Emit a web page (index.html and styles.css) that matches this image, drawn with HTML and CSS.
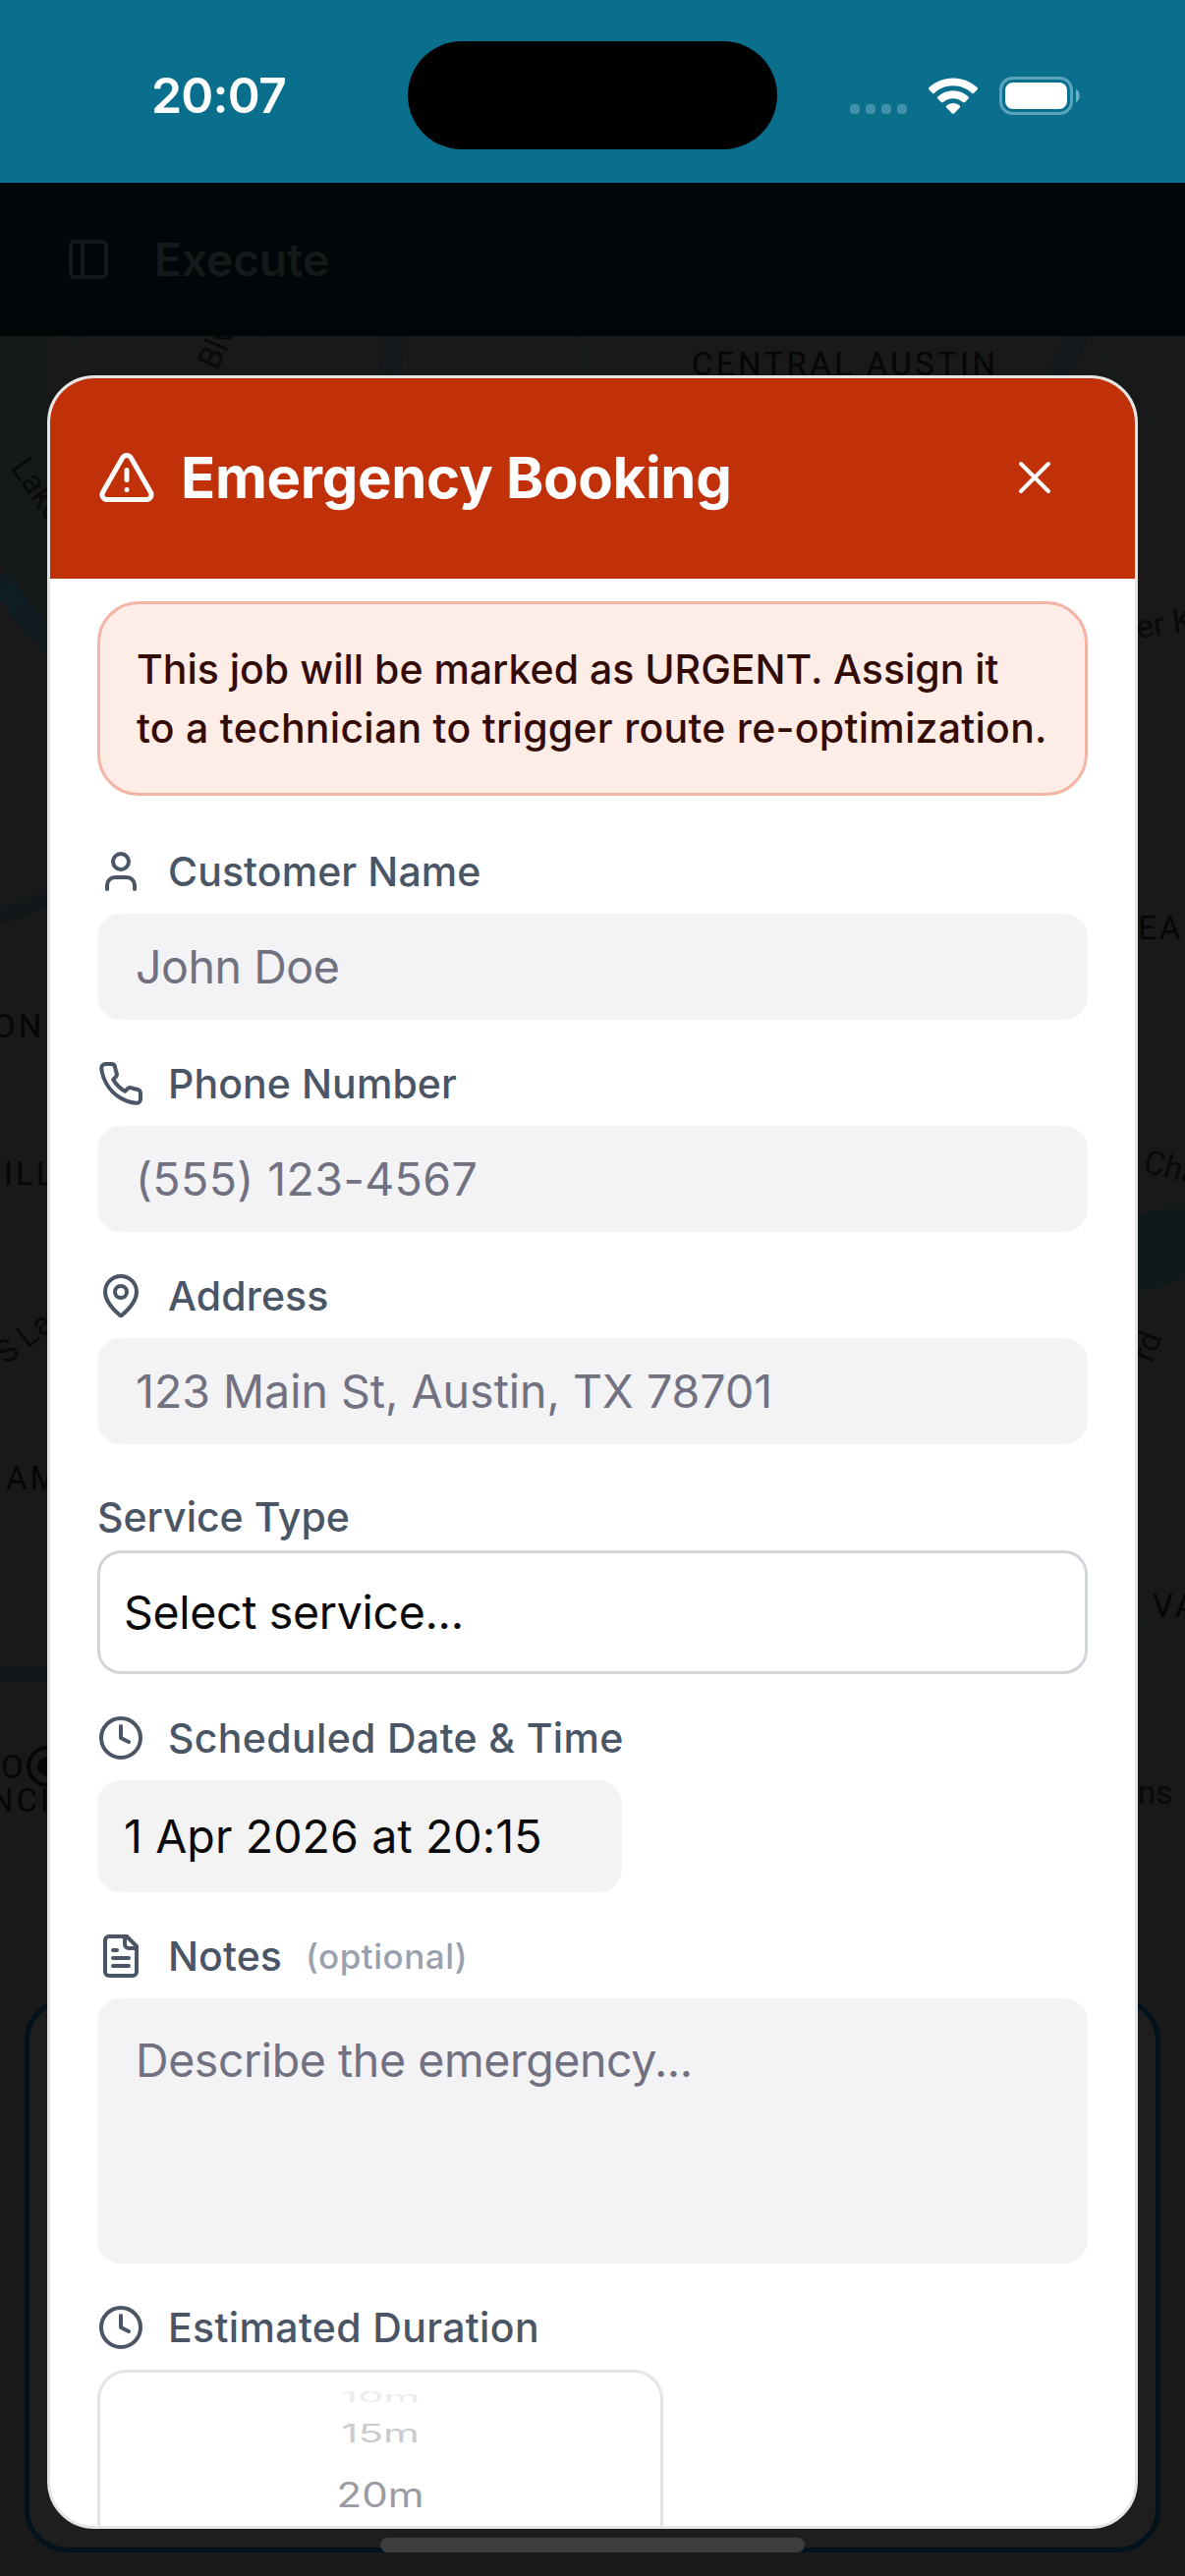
FILE: index.html
```html
<!DOCTYPE html>
<html lang="en">
<head>
    <meta charset="UTF-8">
    <meta name="viewport" content="width=device-width, initial-scale=1.0">
    <title>Emergency Booking</title>
    <link rel="stylesheet" href="styles.css">
</head>
<body>

<div class="statusbar">
    <div class="clock">20:07</div>
    <div class="island"></div>
    <div class="indicators">
        <svg class="dots" width="60" height="12" viewBox="0 0 60 12" fill="#4291aa">
            <rect x="1" y="1" width="10" height="10" rx="4"/>
            <rect x="17" y="1" width="10" height="10" rx="4"/>
            <rect x="33" y="1" width="10" height="10" rx="4"/>
            <rect x="49" y="1" width="10" height="10" rx="4"/>
        </svg>
        <svg class="wifi" width="52" height="38" viewBox="0 0 52 38" fill="#fff">
            <path d="M26 .5c9.300 0 18 3.500 24.500 9.600.7.700.7 1.500.1 2.200l-3.500 3.500c-.6.600-1.400.6-2 .1C40 11 33.300 8.300 26 8.300S12 11 6.900 15.900c-.6.500-1.400.5-2-.1l-3.500-3.500c-.6-.7-.6-1.500.1-2.200C8 4 16.700.5 26 .5z"/>
            <path d="M26 13.300c5.800 0 11.200 2.200 15.400 6 .7.600.7 1.500.1 2.100L38 24.900c-.6.600-1.400.6-2 .1-2.800-2.400-6.200-3.800-10-3.800s-7.200 1.400-10 3.800c-.6.500-1.400.5-2-.1l-3.500-3.500c-.6-.6-.6-1.500.1-2.100 4.200-3.800 9.600-6 15.400-6z"/>
            <path d="M26 26c2.500 0 4.800.9 6.700 2.500.7.600.7 1.400.1 2.100l-5.800 5.800c-.6.600-1.400.6-2 0l-5.800-5.800c-.6-.7-.6-1.500.1-2.100C21.200 26.900 23.500 26 26 26z"/>
        </svg>
        <svg class="battery" width="82" height="39" viewBox="0 0 82 39">
            <rect x="1.500" y="1.500" width="72" height="36" rx="12" fill="none" stroke="#5ba5bc" stroke-width="3"/>
            <rect x="6" y="6" width="63" height="27" rx="8" fill="#fff"/>
            <path d="M78 13c5 1.500 5 11.500 0 13z" fill="#6fb0c4"/>
        </svg>
    </div>
</div>

<div class="appbar">
    <svg class="icon" viewBox="0 0 24 24"><rect x="3" y="3" width="18" height="18" rx="2"/><path d="M9 3v18"/></svg>
    <span>Execute</span>
</div>

<div class="backdrop">
    <!-- dimmed map under the dialog -->
    <svg class="map" width="1206" height="1503" viewBox="0 0 1206 1503">
        <path d="M0 0h50v330L0 230z" fill="#161a17"/>
        <path d="M0 480h50v150H0zM1158 500h48v60h-48zM1158 640h48v500h-48z" fill="#171a18"/>
        <path d="M1158 896q20-10 48-8v70q-20 10-48 14z" fill="#0f191c"/>
        <path d="M0 244q20 40 60 76" fill="none" stroke="#0f1b1f" stroke-width="24"/>
        <path d="M0 590q30-6 60-26M0 1363h60" fill="none" stroke="#131719" stroke-width="16"/>
        <path d="M400-4q2 20-8 60M1098-4l-28 60" fill="none" stroke="#13181a" stroke-width="22"/>
        <path d="M270 0q10 30 50 60M590 0l12 60M80 0q-20 40-80 50M1120 20l60 80M1158 1310l48 10" fill="none" stroke="#161a1b" stroke-width="5"/>
        <g class="places">
            <text x="704" y="40" textLength="312">CENTRAL AUSTIN</text>
            <text x="-7" y="714">ON</text>
            <text x="4" y="864">ILL</text>
            <text x="6" y="1174">AM</text>
            <text x="1158" y="614">EA</text>
            <text x="1173" y="1304">VA</text>
            <text x="1" y="1468">O</text>
            <text x="-10" y="1502">NCH</text>
            <circle cx="48" cy="1456" r="19" fill="none" stroke="#060606" stroke-width="4"/>
            <circle cx="48" cy="1456" r="10"/>
        </g>
        <g class="roads">
            <text transform="translate(221 36) rotate(-66)">Blvd</text>
            <text transform="translate(10 134) rotate(55)">Lake</text>
            <text transform="translate(-4 262) rotate(50)" fill="#0b2028">er</text>
            <text transform="translate(6 1048) rotate(-38)">S Lamar</text>
            <text transform="translate(1158 308) rotate(-8)">er Kin</text>
            <text transform="translate(1162 850) rotate(15)">Cha</text>
            <text transform="translate(1172 1046) rotate(-68)">rd</text>
            <text x="1158" y="1494">ns</text>
        </g>
    </svg>
    <div class="sheet"></div>
</div>

<div class="dialog">
    <div class="dialog-head">
        <svg class="icon" viewBox="0 0 24 24"><path d="m21.730 18-8-14a2 2 0 0 0-3.480 0l-8 14A2 2 0 0 0 4 21h16a2 2 0 0 0 1.730-3"/><path d="M12 9v4M12 17h.01"/></svg>
        <span class="title">Emergency Booking</span>
        <svg class="icon close" viewBox="0 0 24 24"><path d="M18 6 6 18M6 6l12 12"/></svg>
    </div>
    <div class="dialog-body">
        <div class="alert">
            <div>This job will be marked as URGENT. Assign it</div>
            <div class="line2">to a technician to trigger route re-optimization.</div>
        </div>

        <div class="label">
            <svg class="icon" viewBox="0 0 24 24"><path d="M19 21v-2a4 4 0 0 0-4-4H9a4 4 0 0 0-4 4v2"/><circle cx="12" cy="7" r="4"/></svg>
            <span>Customer Name</span>
        </div>
        <div class="input name">John Doe</div>

        <div class="label">
            <svg class="icon" viewBox="0 0 24 24"><path d="M22 16.920v3a2 2 0 0 1-2.180 2 19.790 19.790 0 0 1-8.630-3.070 19.500 19.500 0 0 1-6-6 19.790 19.790 0 0 1-3.070-8.670A2 2 0 0 1 4.110 2h3a2 2 0 0 1 2 1.720 12.840 12.840 0 0 0 .7 2.810 2 2 0 0 1-.45 2.110L8.090 9.910a16 16 0 0 0 6 6l1.270-1.270a2 2 0 0 1 2.110-.45 12.840 12.840 0 0 0 2.810.7A2 2 0 0 1 22 16.920z"/></svg>
            <span>Phone Number</span>
        </div>
        <div class="input phone">(555) 123-4567</div>

        <div class="label">
            <svg class="icon" viewBox="0 0 24 24"><path d="M20 10c0 4.993-5.539 10.193-7.399 11.799a1 1 0 0 1-1.202 0C9.539 20.193 4 14.993 4 10a8 8 0 0 1 16 0"/><circle cx="12" cy="10" r="3"/></svg>
            <span>Address</span>
        </div>
        <div class="input">123 Main St, Austin, TX 78701</div>

        <div class="label label-service">Service Type</div>
        <div class="select">Select service...</div>

        <div class="label wide">
            <svg class="icon" viewBox="0 0 24 24"><circle cx="12" cy="12" r="10"/><path d="M12 6v6l4 2"/></svg>
            <span>Scheduled Date &amp; Time</span>
        </div>
        <div class="datetime">1 Apr 2026 at 20:15</div>

        <div class="label">
            <svg class="icon" viewBox="0 0 24 24"><path d="M15 2H6a2 2 0 0 0-2 2v16a2 2 0 0 0 2 2h12a2 2 0 0 0 2-2V7Z"/><path d="M14 2v4a2 2 0 0 0 2 2h4M10 9H8M16 13H8M16 17H8"/></svg>
            <span>Notes</span>
            <span class="optional">(optional)</span>
        </div>
        <div class="input textarea">Describe the emergency...</div>

        <div class="label wide">
            <svg class="icon" viewBox="0 0 24 24"><circle cx="12" cy="12" r="10"/><path d="M12 6v6l4 2"/></svg>
            <span>Estimated Duration</span>
        </div>
        <div class="picker">
            <div class="opt opt10">10m</div>
            <div class="opt opt15">15m</div>
            <div class="opt opt20">20m</div>
        </div>
    </div>
</div>

<div class="home"></div>

</body>
</html>
```
FILE: styles.css
```css
*{
    box-sizing: border-box;
}
body{
    position: relative;
    margin: 0;
    width: 1206px;
    height: 2622px;
    overflow: hidden;
    background-color: #191919;
    font-family: Inter, "Liberation Sans", sans-serif;
    font-size: 41px;
    white-space: nowrap;
}
svg{
    display: block;
    flex-shrink: 0;
}
.icon{
    width: 48px;
    height: 48px;
    fill: none;
    stroke: currentColor;
    stroke-width: 2;
    stroke-linecap: round;
    stroke-linejoin: round;
}

/* status bar */
.statusbar{
    display: grid;
    grid-template-columns: 415px 376px 415px;
    height: 186px;
    padding-top: 42px;
    background-color: #0a6f8c;
}
.clock{
    height: 110px;
    line-height: 111px;
    padding-left: 154px;
    color: #fff;
    font-size: 50px;
    font-weight: 600;
    letter-spacing: -.8px;
}
.island{
    height: 110px;
    border-radius: 55px;
    background-color: #000;
}
.indicators{
    display: flex;
    padding: 36px 0 0 73px;
}
.dots{
    margin-top: 27px;
}
.wifi{
    margin-left: 20px;
    margin-top: 1px;
}
.battery{
    margin-left: 21px;
}

.appbar{
    display: flex;
    align-items: center;
    gap: 43px;
    height: 156px;
    padding-left: 66px;
    background-color: #020609;
    color: #15191a;
    font-size: 46px;
    font-weight: 600;
}

/* page behind the dialog */
.backdrop{
    position: relative;
    height: 2280px;
}
.places{
    fill: #060606;
    font-family: Roboto, sans-serif;
    font-size: 33px;
    letter-spacing: 3px;
}
.roads{
    fill: #080909;
    font-family: Roboto, sans-serif;
    font-size: 33px;
}
.sheet{
    position: absolute;
    left: 25px;
    top: 1691px;
    width: 1156px;
    height: 565px;
    border: 5px solid #02121a;
    border-radius: 44px;
    background-color: #1d1e1d;
}

/* dialog */
.dialog{
    position: absolute;
    left: 48px;
    top: 382px;
    width: 1110px;
    height: 2192px;
    border: 3px solid #e5e5e6;
    border-radius: 48px;
    background-color: #fff;
    overflow: hidden;
}
.dialog-head{
    display: flex;
    align-items: center;
    height: 204px;
    padding: 0 74px 2px 48px;
    background-color: #c0310a;
    color: #fff;
}
.dialog-head .icon{
    width: 60px;
    height: 60px;
}
.dialog-head .close{
    width: 56px;
    height: 56px;
    margin-left: auto;
    stroke-width: 1.700;
}
.title{
    margin-left: 25px;
    font-size: 58px;
    font-weight: 700;
    letter-spacing: -.3px;
}
.dialog-body{
    padding: 23px 48px 0;
}
.alert{
    height: 198px;
    padding: 36px 37px;
    border: 3px solid #f3b3a5;
    border-radius: 42px;
    background-color: #feece6;
    color: #330b05;
    font-weight: 500;
    line-height: 60px;
}
.line2{
    letter-spacing: .27px;
}
.label{
    display: flex;
    align-items: center;
    gap: 24px;
    height: 48px;
    margin: 41px 0 19px;
    color: #4a5565;
    font-weight: 500;
    letter-spacing: .1px;
}
.wide{
    letter-spacing: .35px;
}
.alert + .label{
    margin-top: 53px;
}
.optional{
    color: #99a1af;
    font-size: 35px;
    letter-spacing: .5px;
}
.input{
    display: flex;
    align-items: center;
    height: 108px;
    padding: 0 39px;
    border-radius: 24px;
    background-color: #f3f3f5;
    color: #717182;
    font-size: 46.5px;
}
.name{
    letter-spacing: -.45px;
}
.phone{
    letter-spacing: .4px;
}
.label-service{
    margin: 50px 0 10px;
    letter-spacing: 0;
}
.select{
    display: flex;
    align-items: center;
    height: 126px;
    padding: 0 24px;
    border: 3px solid #d1d5d9;
    border-radius: 24px;
    color: #0a0a0a;
    font-size: 46.5px;
    letter-spacing: -.33px;
}
.datetime{
    display: flex;
    align-items: center;
    width: 534px;
    height: 114px;
    padding-left: 27px;
    border-radius: 24px;
    background-color: #f3f3f4;
    color: #0a0a0a;
    font-size: 46.5px;
    letter-spacing: .1px;
}
.textarea{
    align-items: flex-start;
    height: 270px;
    padding-top: 35px;
    letter-spacing: -.43px;
}
.picker{
    width: 576px;
    height: 300px;
    padding-top: 14px;
    border: 3px solid #e3e5e7;
    border-radius: 30px;
    text-align: center;
    font-size: 42px;
}
/* the wheel squashes the rows as they turn away */
.opt{
    line-height: 48px;
}
.opt10{
    height: 26px;
    line-height: 14px;
    color: #ebecec;
    transform: scaleY(.33);
}
.opt15{
    height: 44px;
    line-height: 44px;
    color: #c9cbce;
    transform: scaleY(.6);
}
.opt20{
    margin-top: 17px;
    color: #9b9ba3;
    transform: scaleY(.83);
}

.home{
    position: absolute;
    left: 387px;
    top: 2583px;
    width: 432px;
    height: 15px;
    border-radius: 8px;
    background-color: #3c3e3e;
}
```
